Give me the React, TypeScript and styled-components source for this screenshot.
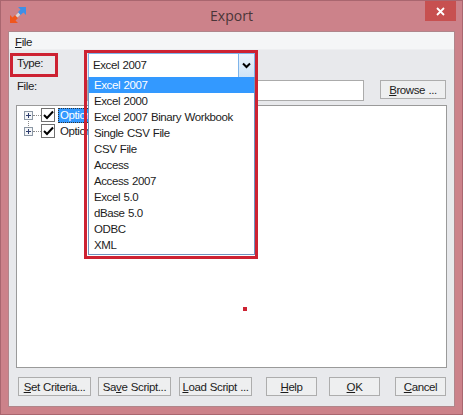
import React from "react";
import styled, { createGlobalStyle } from "styled-components";

const Global = createGlobalStyle`
  html, body { margin: 0; padding: 0; background: #cc828a; }
  * { box-sizing: border-box; }
`;

const Frame = styled.div`
  width: 463px;
  height: 415px;
  background: #cc828a;
  border: 1px solid #a9666f;
  display: flex;
  flex-direction: column;
  padding: 0 7px 7px;
  font-family: "Liberation Sans", Arial, sans-serif;
  font-size: 11.5px;
  letter-spacing: -0.4px;
  word-spacing: 0.6px;
  color: #1c1c1c;
  position: relative;
  overflow: hidden;
`;

const TitleBar = styled.div`
  height: 30px;
  flex: none;
  display: flex;
  align-items: center;
  justify-content: center;
  position: relative;
  padding-bottom: 1px;
  font-size: 14px;
  letter-spacing: 0;
  color: #4a3538;
  font-family: "Open Sans", sans-serif;
`;

const AppIcon = styled.svg`
  position: absolute;
  left: 2px;
  top: 6px;
`;

const CloseButton = styled.div`
  position: absolute;
  right: -1px;
  top: 0;
  width: 31px;
  height: 20px;
  background: #c75050;
  display: flex;
  align-items: center;
  justify-content: center;
`;

const Client = styled.div`
  flex: 1;
  display: flex;
  flex-direction: column;
  background: #e8e9ec;
  border: 1px solid #b0868b;
  min-height: 0;
`;

const MenuBar = styled.div`
  height: 18px;
  flex: none;
  background: #f5f6f7;
  border-bottom: 1px solid #eeeff1;
  padding: 2px 6px 0;
  line-height: 16px;
`;

const Key = styled.span`
  text-decoration: underline;
  text-underline-offset: 1px;
`;

const Body = styled.div`
  flex: 1;
  display: flex;
  flex-direction: column;
  padding: 0 7px;
  min-height: 0;
`;

const TypeRow = styled.div`
  height: 27px;
  flex: none;
  display: flex;
  align-items: flex-start;
  padding-top: 3px;
`;

const FileRow = styled.div`
  height: 24px;
  flex: none;
  display: flex;
  align-items: flex-start;
  padding-top: 3px;
`;

const LabelCell = styled.div`
  width: 71px;
  flex: none;
  display: flex;
`;

const TypeLabel = styled.div`
  margin-left: -6px;
  width: 48px;
  height: 24px;
  border: 3px solid #cd2232;
  padding-left: 4px;
  line-height: 14px;
`;

const PlainLabel = styled.div`
  padding-left: 1px;
  line-height: 12px;
`;

const ComboHighlight = styled.div`
  position: relative;
  width: 174px;
  margin-left: -3px;
`;

const Combo = styled.div`
  height: 24px;
  margin: 0 4px;
  width: 167px;
  display: flex;
  background: #fff;
  border: 1px solid #7eb4ea;
  border-bottom: 0;
  line-height: 22px;
  padding-left: 4px;
`;

const ComboText = styled.div`
  flex: 1;
`;

const ComboArrow = styled.div`
  width: 16px;
  border-left: 1px solid #7eb4ea;
  background: linear-gradient(#ebf4fc, #cfe4f7);
  display: flex;
  align-items: center;
  justify-content: center;
`;

const Annotation = styled.div`
  position: absolute;
  left: 0;
  top: -3px;
  width: 174px;
  height: 209px;
  border: 3px solid #cd2232;
  pointer-events: none;
  z-index: 3;
`;

const DropList = styled.div`
  position: absolute;
  left: 4px;
  top: 24px;
  width: 167px;
  height: 178px;
  background: #fff;
  border: 1px solid #6f93bf;
  border-top: 0;
  z-index: 2;
`;

const DropItem = styled.div<{ $on?: boolean }>`
  height: 16px;
  line-height: 16px;
  padding-left: 5px;
  white-space: nowrap;
  background: ${(p) => (p.$on ? "#3399ff" : "transparent")};
  color: ${(p) => (p.$on ? "#fff" : "#1c1c1c")};
`;

const FileInput = styled.div`
  flex: none;
  width: 277px;
  height: 21px;
  background: #fff;
  border: 1px solid #ababab;
`;

const PushButton = styled.button<{ $w: number; $ml: number }>`
  flex: none;
  height: 19px;
  width: ${(p) => p.$w}px;
  margin-left: ${(p) => p.$ml}px;
  background: #eeeff0;
  border: 1px solid #adadad;
  font: inherit;
  letter-spacing: inherit;
  word-spacing: inherit;
  color: inherit;
  padding: 0;
  white-space: nowrap;
`;

const TreePanel = styled.div`
  height: 263px;
  flex: none;
  margin-top: 4px;
  background: #fff;
  border: 1px solid #9a9a9a;
  padding: 1px 0 0 3px;
  position: relative;
`;

const TreeRow = styled.div`
  height: 16px;
  display: flex;
  align-items: center;
`;

const Expander = styled.div`
  width: 9px;
  height: 9px;
  border: 1px solid #8b97a5;
  margin-left: 4px;
  position: relative;
  background: #f4f6f8;
  &::before { content: ""; position: absolute; left: 1px; top: 3px; width: 5px; height: 1px; background: #2f3e6e; }
  &::after { content: ""; position: absolute; left: 3px; top: 1px; width: 1px; height: 5px; background: #2f3e6e; }
`;

const Dots = styled.div`
  width: 8px;
  border-top: 1px dotted #8a8a8a;
`;

const TreeLink = styled.div`
  position: absolute;
  left: 11px;
  top: 15px;
  height: 7px;
  border-left: 1px dotted #8a8a8a;
`;

const Check = styled.div`
  width: 14px;
  height: 14px;
  border: 1px solid #707070;
  background: #fff;
  display: flex;
  align-items: center;
  justify-content: center;
`;

const OptionText = styled.div<{ $on?: boolean }>`
  margin-left: 3px;
  padding: 0 2px;
  height: 15px;
  line-height: 14px;
  width: 60px;
  background: ${(p) => (p.$on ? "#3399ff" : "transparent")};
  color: ${(p) => (p.$on ? "#fff" : "#1c1c1c")};
  outline: ${(p) => (p.$on ? "1px dotted #333" : "none")};
  outline-offset: -1px;
`;

const Marker = styled.div`
  position: absolute;
  left: 226px;
  top: 201px;
  width: 4px;
  height: 4px;
  background: #cd2232;
`;

const Footer = styled.div`
  flex: 1;
  display: flex;
  align-items: flex-start;
  padding: 9px 0 0 2px;
`;

const items = [
  "Excel 2007", "Excel 2000", "Excel 2007 Binary Workbook", "Single CSV File", "CSV File",
  "Access", "Access 2007", "Excel 5.0", "dBase 5.0", "ODBC", "XML",
];

const CheckMark = () => (
  <svg width="11" height="10" viewBox="0 0 11 10">
    <path d="M1 5 L4 8 L10 1.5" fill="none" stroke="#000" strokeWidth="2" />
  </svg>
);

export default function App() {
  return (
    <Frame>
      <Global />
      <TitleBar>
        <AppIcon width="16" height="16" viewBox="0 0 16 16">
          <path d="M0 16 L0 8 L2.5 10.5 L5 8 L8 11 L5.5 13.5 L8 16 Z" fill="#f0561d" />
          <path d="M5.5 8.5 L8.5 5.5 L10.5 7.5 L7.5 10.5 Z" fill="#d8d4d6" />
          <path d="M16 0 L16 8 L13.5 5.5 L10.5 8 L8 5 L10.5 2.5 L8 0 Z" fill="#3d8fe8" />
        </AppIcon>
        Export
        <CloseButton>
          <svg width="9" height="9" viewBox="0 0 9 9">
            <path d="M1 1 L8 8 M8 1 L1 8" stroke="#fff" strokeWidth="1.8" />
          </svg>
        </CloseButton>
      </TitleBar>
      <Client>
        <MenuBar><Key>F</Key>ile</MenuBar>
        <Body>
          <TypeRow>
            <LabelCell><TypeLabel>Type:</TypeLabel></LabelCell>
            <ComboHighlight>
              <Annotation />
              <Combo>
                <ComboText>Excel 2007</ComboText>
                <ComboArrow>
                  <svg width="9" height="7" viewBox="0 0 9 7">
                    <path d="M1 1.5 L4.5 5 L8 1.5" fill="none" stroke="#000" strokeWidth="2" />
                  </svg>
                </ComboArrow>
              </Combo>
              <DropList>
                {items.map((t, i) => (
                  <DropItem key={t} $on={i === 0}>{t}</DropItem>
                ))}
              </DropList>
            </ComboHighlight>
          </TypeRow>
          <FileRow>
            <LabelCell><PlainLabel>File:</PlainLabel></LabelCell>
            <FileInput />
            <PushButton $w={66} $ml={16}><Key>B</Key>rowse ...</PushButton>
          </FileRow>
          <TreePanel>
            <TreeRow>
              <Expander /><Dots /><Check><CheckMark /></Check>
              <OptionText $on>Options</OptionText>
            </TreeRow>
            <TreeRow>
              <Expander /><Dots /><Check><CheckMark /></Check>
              <OptionText>Options</OptionText>
            </TreeRow>
            <TreeLink />
            <Marker />
          </TreePanel>
          <Footer>
            <PushButton $ml={0} $w={73}><Key>S</Key>et Criteria...</PushButton>
            <PushButton $ml={7} $w={73}>Sa<Key>v</Key>e Script...</PushButton>
            <PushButton $ml={8} $w={73}><Key>L</Key>oad Script ...</PushButton>
            <PushButton $ml={14} $w={51}><Key>H</Key>elp</PushButton>
            <PushButton $ml={12} $w={51}><Key>O</Key>K</PushButton>
            <PushButton $ml={15} $w={51}><Key>C</Key>ancel</PushButton>
          </Footer>
        </Body>
      </Client>
    </Frame>
  );
}
